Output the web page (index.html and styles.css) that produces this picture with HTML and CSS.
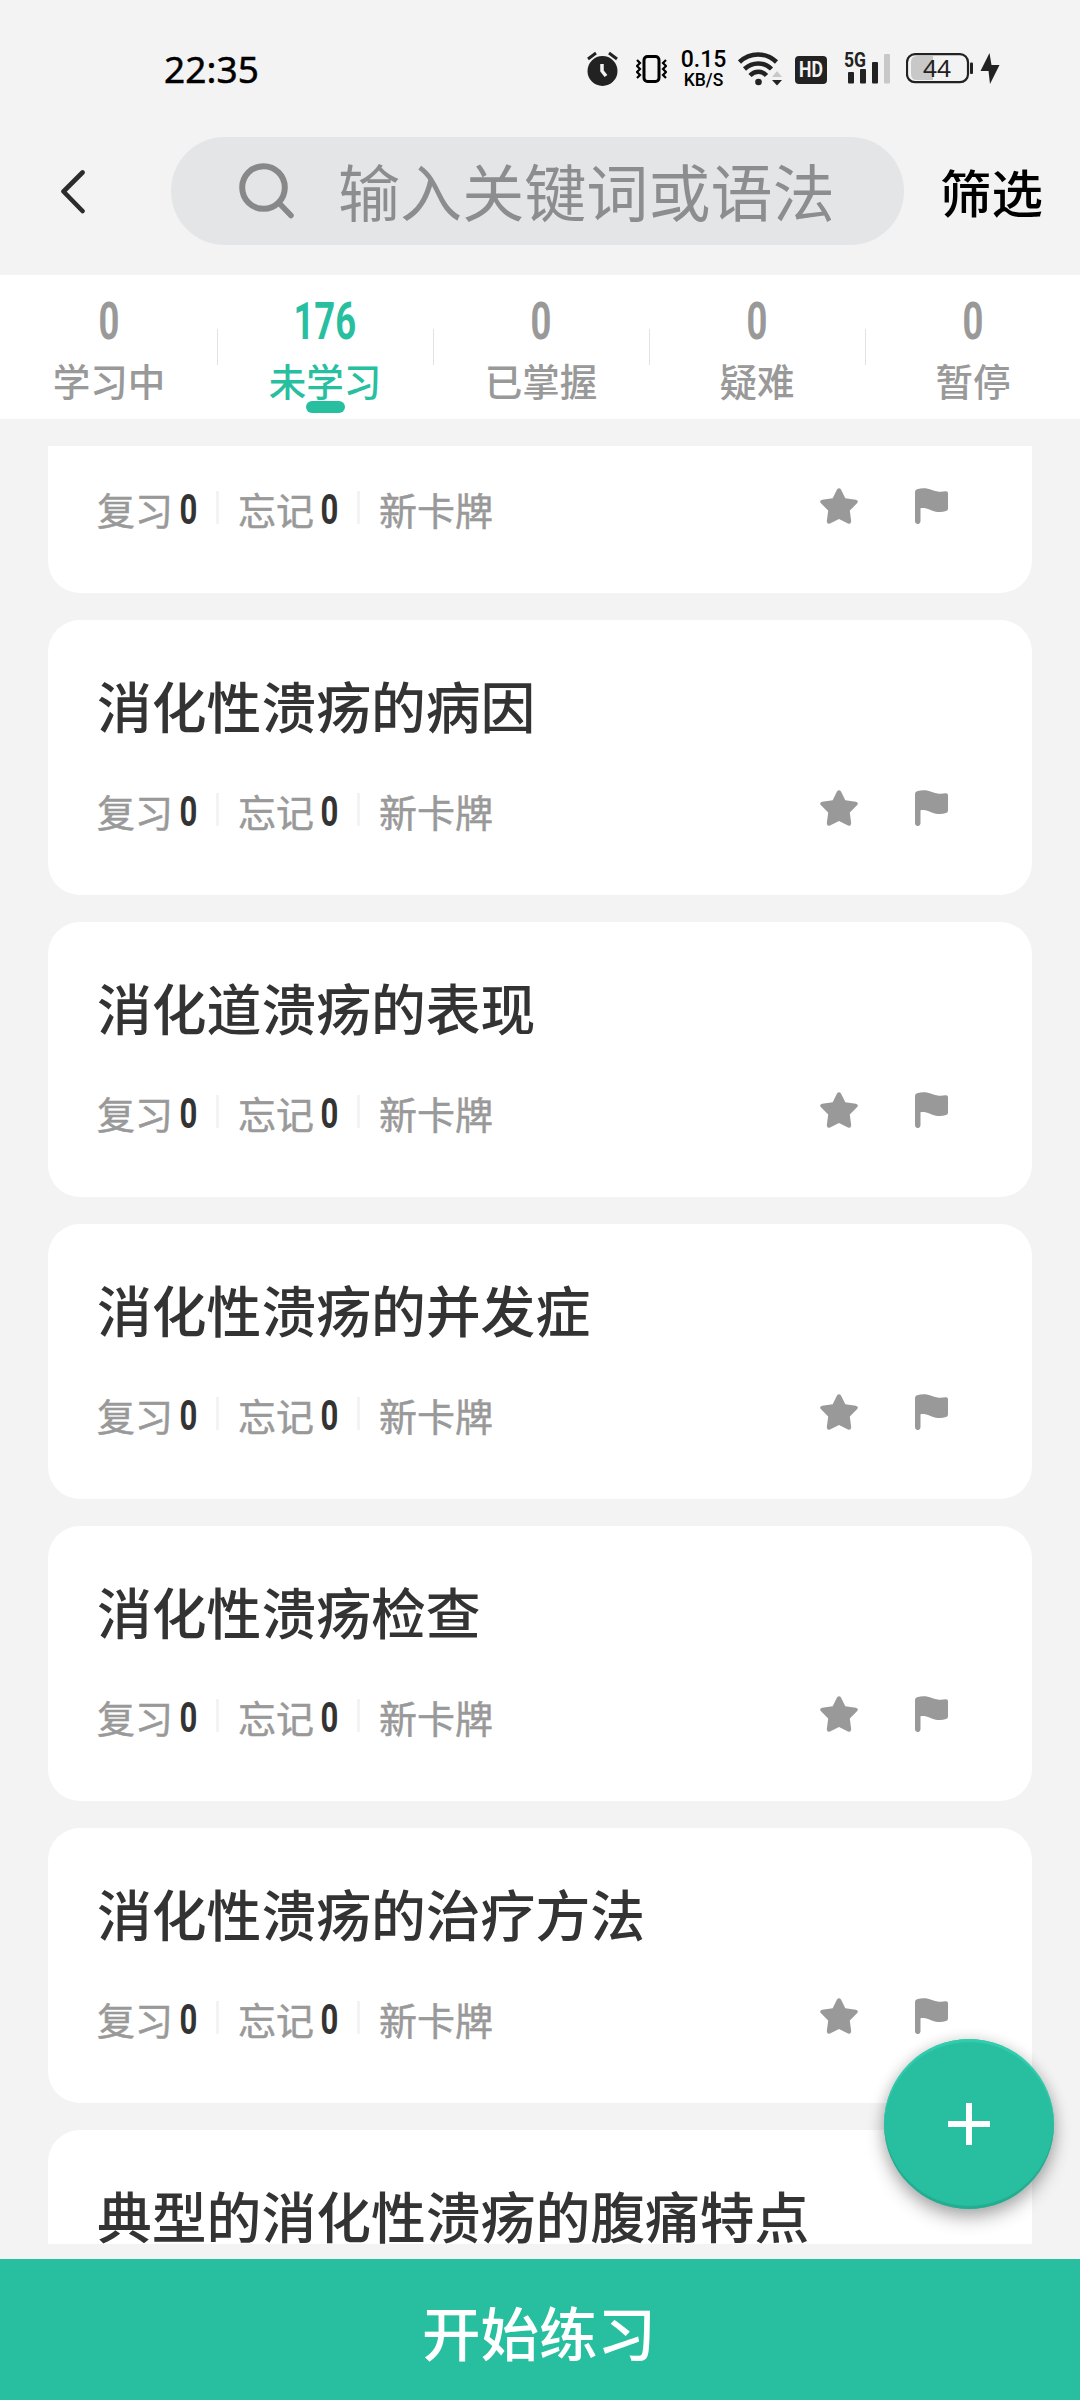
FILE: index.html
```html
<!DOCTYPE html>
<html lang="zh-CN">
<head>
    <meta charset="UTF-8">
    <meta name="viewport" content="width=device-width, initial-scale=1.0">
    <title>卡牌列表</title>
    <link rel="stylesheet" href="styles.css">
</head>
<body>
    <!-- shared icons -->
    <svg class="symbols">
        <symbol id="star" viewBox="0 0 38 36">
            <path d="M17 1.6Q19 -1 21 1.6L25.3 10.3L35.8 11.7Q39 12.8 37.2 15L29.8 22.6L31.2 33.2Q31 36.6 28 35.6L19 31L10 35.6Q7 36.6 6.8 33.2L8.2 22.6L0.8 15Q-1 12.8 2.2 11.7L12.7 10.3Z"/>
        </symbol>
        <symbol id="flag" viewBox="0 0 33 36">
            <path d="M0 4Q0 1.8 2 1.2C7 -0.4 12 -0.2 17 1.9C21.5 3.8 26 4 30.5 3.3Q33 3 33 5.3V20.5Q33 22.5 31 23.1C26 24.6 20 24.2 15 21.7C11.5 20.2 8.500 19.700 5.500 20.200V33.300A2.750 2.750 0 0 1 0 33.300Z"/>
        </symbol>
    </svg>

    <div class="status-bar">
        <div class="time">22:35</div>
        <div class="status-icons">
            <svg class="alarm" width="31" height="36" viewBox="0 0 31 36">
                <circle cx="15.500" cy="20" r="15" fill="#222"/>
                <path d="M1 8L9 2M30 8L22 2" stroke="#222" stroke-width="3" fill="none"/>
                <path d="M15 13V20L19 25" stroke="#f3f3f3" stroke-width="3.500" fill="none"/>
            </svg>
            <svg class="vibrate" width="31" height="36" viewBox="0 0 31 36" fill="none" stroke="#000">
                <rect x="8" y="5.500" width="15" height="25" rx="3.500" stroke-width="3"/>
                <path d="M1 9L4 12L1 15L4 18L1 21L4 24L1 27M30 9L27 12L30 15L27 18L30 21L27 24L30 27" stroke-width="2.200"/>
            </svg>
            <div class="speed"><span>0.15</span><small>KB/S</small></div>
            <svg class="wifi" width="45" height="36" viewBox="0 0 45 36">
                <g fill="none" stroke="#222" stroke-width="4.500">
                    <path d="M1.500 11C12 1 28 1 38.500 11"/>
                    <path d="M6.500 18C14.500 10.500 26 10.500 33.500 18"/>
                    <path d="M12 24.500C17 19.500 24 19.500 28.500 24.500"/>
                </g>
                <circle cx="20.500" cy="31" r="3.300" fill="#222"/>
                <path d="M34 26L39 20L44 26Z" fill="#c8c8c8"/>
                <path d="M34 29L39 34.500L44 29Z" fill="#222"/>
            </svg>
            <div class="hd"><span>HD</span></div>
            <svg class="signal" width="46" height="36" viewBox="0 0 46 36" fill="#222">
                <text x="0" y="16" textLength="22" lengthAdjust="spacingAndGlyphs">5G</text>
                <rect x="4" y="21" width="6" height="11.500" rx="1"/>
                <rect x="16" y="18" width="6" height="14.500" rx="1"/>
                <rect x="28" y="11" width="6" height="21.500" rx="1"/>
                <rect x="40" y="3" width="6" height="29.500" rx="1" fill="#c8c8c8"/>
            </svg>
            <svg class="battery" width="67" height="36" viewBox="0 0 67 36">
                <path d="M11 5H27V29H11Q5 29 5 23V11Q5 5 11 5Z" fill="#c8c8c8"/>
                <rect x="1" y="3.200" width="61" height="28" rx="8" fill="none" stroke="#222" stroke-width="2.200"/>
                <rect x="64" y="11.500" width="3" height="11.500" rx="1" fill="#222"/>
                <text x="17" y="26" textLength="28" lengthAdjust="spacingAndGlyphs">44</text>
            </svg>
            <svg class="bolt" width="20" height="36" viewBox="0 0 20 36">
                <path d="M9.500 2L0.500 20H8.500L10 33L19.500 14H11.500Z" fill="#222"/>
            </svg>
        </div>
    </div>

    <div class="search-bar">
        <svg class="back" width="26" height="44" viewBox="0 0 26 44">
            <path d="M22.500 2.500L3.500 21.500L22.500 41" fill="none" stroke="#2c2c2c" stroke-width="4.600" stroke-linecap="round" stroke-linejoin="round"/>
        </svg>
        <div class="search-box">
            <svg width="56" height="56" viewBox="0 0 56 56" fill="none" stroke="#888">
                <circle cx="24.500" cy="24.500" r="21.300" stroke-width="6"/>
                <path d="M40 40L52 52.500" stroke-width="5.500" stroke-linecap="round"/>
            </svg>
            <span>输入关键词或语法</span>
        </div>
        <div class="filter">筛选</div>
    </div>

    <div class="tabs">
        <div class="tab"><b>0</b><span>学习中</span></div>
        <div class="tab active"><b>176</b><span>未学习</span></div>
        <div class="tab"><b>0</b><span>已掌握</span></div>
        <div class="tab"><b>0</b><span>疑难</span></div>
        <div class="tab"><b>0</b><span>暂停</span></div>
    </div>

    <div class="card-list">
        <div class="card first">
            <div class="card-info">
                <span>复习</span><b>0</b><i></i><span>忘记</span><b>0</b><i></i><span>新卡牌</span>
                <svg class="star"><use href="#star"/></svg><svg class="flag"><use href="#flag"/></svg>
            </div>
        </div>
        <div class="card">
            <h3>消化性溃疡的病因</h3>
            <div class="card-info">
                <span>复习</span><b>0</b><i></i><span>忘记</span><b>0</b><i></i><span>新卡牌</span>
                <svg class="star"><use href="#star"/></svg><svg class="flag"><use href="#flag"/></svg>
            </div>
        </div>
        <div class="card">
            <h3>消化道溃疡的表现</h3>
            <div class="card-info">
                <span>复习</span><b>0</b><i></i><span>忘记</span><b>0</b><i></i><span>新卡牌</span>
                <svg class="star"><use href="#star"/></svg><svg class="flag"><use href="#flag"/></svg>
            </div>
        </div>
        <div class="card">
            <h3>消化性溃疡的并发症</h3>
            <div class="card-info">
                <span>复习</span><b>0</b><i></i><span>忘记</span><b>0</b><i></i><span>新卡牌</span>
                <svg class="star"><use href="#star"/></svg><svg class="flag"><use href="#flag"/></svg>
            </div>
        </div>
        <div class="card">
            <h3>消化性溃疡检查</h3>
            <div class="card-info">
                <span>复习</span><b>0</b><i></i><span>忘记</span><b>0</b><i></i><span>新卡牌</span>
                <svg class="star"><use href="#star"/></svg><svg class="flag"><use href="#flag"/></svg>
            </div>
        </div>
        <div class="card">
            <h3>消化性溃疡的治疗方法</h3>
            <div class="card-info">
                <span>复习</span><b>0</b><i></i><span>忘记</span><b>0</b><i></i><span>新卡牌</span>
                <svg class="star"><use href="#star"/></svg><svg class="flag"><use href="#flag"/></svg>
            </div>
        </div>
        <div class="card">
            <h3>典型的消化性溃疡的腹痛特点</h3>
        </div>
    </div>

    <div class="start-button">开始练习</div>

    <div class="add-button">
        <svg width="42" height="42" viewBox="0 0 42 42">
            <path d="M21 0V42M0 21H42" stroke="#fff" stroke-width="6"/>
        </svg>
    </div>
</body>
</html>
```
FILE: styles.css
```css
* {
    box-sizing: border-box;
}
body {
    font-family: "Noto Sans CJK SC", sans-serif;
    margin: 0;
    width: 1080px;
    height: 2400px;
    display: flex;
    flex-direction: column;
    background-color: #f3f3f3;
    position: relative;
    overflow: hidden;
}
svg {
    display: block;
    flex-shrink: 0;
}
.symbols {
    position: absolute;
    width: 0;
    height: 0;
}

/* status bar */
.status-bar {
    height: 137px;
    flex-shrink: 0;
    padding: 51px 80px 0 164px;
    display: flex;
    justify-content: space-between;
    align-items: flex-start;
}
.time {
    font: 400 37px/36px "Noto Sans", sans-serif;
    -webkit-text-stroke: 0.5px #000;
    letter-spacing: 0.1px;
    color: #000;
}
.status-icons {
    display: flex;
    height: 36px;
}
.vibrate {
    margin-left: 18px;
}
.speed {
    width: 43px;
    margin-left: 15px;
    display: flex;
    flex-direction: column;
    align-items: center;
    font-family: "Roboto", sans-serif;
    font-weight: 500;
    color: #000;
    white-space: nowrap;
}
.speed span {
    font-size: 23px;
    line-height: 18px;
}
.speed small {
    font-size: 17.500px;
    line-height: 22px;
}
.wifi {
    margin-left: 13px;
}
.hd {
    width: 32px;
    height: 28px;
    margin: 5px 0 0 12px;
    border-radius: 4px;
    background-color: #222;
    color: #f3f3f3;
    font: bold 22px/28px "Roboto", sans-serif;
    display: flex;
    justify-content: center;
}
.hd span {
    transform: scaleX(0.8);
}
.signal {
    margin-left: 17px;
    font: bold 20px "Roboto", sans-serif;
}
.battery {
    margin-left: 16px;
    font: 24px "Noto Sans", sans-serif;
    fill: #222;
}
.bolt {
    margin-left: 7px;
}

/* search */
.search-bar {
    height: 138px;
    flex-shrink: 0;
    display: flex;
    align-items: flex-start;
}
.back {
    margin: 33px 0 0 60px;
}
.search-box {
    width: 733px;
    height: 108px;
    margin-left: 85px;
    padding-left: 68px;
    border-radius: 54px;
    background-color: #e4e5e7;
    display: flex;
    align-items: center;
}
.search-box span {
    margin-left: 43px;
    font-size: 62.100px;
    line-height: 106px;
    color: #8c8d8f;
    white-space: nowrap;
    margin-top: -2px;
}
.filter {
    margin-left: 36px;
    font-size: 51.500px;
    line-height: 107px;
    font-weight: 500;
    color: #000;
}

/* tabs */
.tabs {
    height: 144px;
    flex-shrink: 0;
    display: flex;
    background-color: #fff;
}
.tab {
    flex: 1;
    position: relative;
    padding-left: 2px;
    display: flex;
    flex-direction: column;
    align-items: center;
    color: #999;
}
.tab b {
    margin-top: 21px;
    font: bold 52px/52px "Roboto", sans-serif;
    transform: scaleX(0.7);
}
.tab span {
    margin-top: 4px;
    font-size: 37.500px;
    line-height: 56px;
    font-weight: 500;
}
.tab + .tab::before {
    content: "";
    position: absolute;
    left: 1px;
    top: 54px;
    width: 1px;
    height: 36px;
    background-color: #e2e2e2;
}
.tab.active {
    color: #28bfa0;
}
.tab.active::after {
    content: "";
    position: absolute;
    left: 90px;
    top: 126px;
    width: 39px;
    height: 12px;
    border-radius: 6px;
    background-color: #28bfa0;
}

/* cards */
.card-list {
    height: 1798px;
    flex-shrink: 0;
    margin: 27px 48px 0;
    overflow: hidden;
}
.card {
    height: 275px;
    margin-bottom: 27px;
    padding: 43px 84px 0 49px;
    border-radius: 32px;
    background-color: #fff;
}
.card.first {
    height: 147px;
    padding-top: 32px;
    border-radius: 0 0 32px 32px;
}
.card h3 {
    margin: 0;
    font-size: 54.800px;
    line-height: 82px;
    font-weight: 500;
    color: #333;
    white-space: nowrap;
}
.card-info {
    display: flex;
    align-items: center;
    height: 56px;
    margin-top: 35px;
}
.first .card-info {
    margin-top: 0;
}
.card-info span {
    margin-top: 6px;
    font-size: 38px;
    line-height: 56px;
    color: #999;
    -webkit-text-stroke: 0.5px #999;
}
.card-info b {
    width: 31px;
    margin-top: 8px;
    font: bold 42px/50px "Roboto", sans-serif;
    text-align: center;
    color: #333;
    transform: scaleX(0.74);
}
.card-info i {
    width: 3px;
    height: 33px;
    margin: 2px 19px 0 12px;
    background-color: #f3f3f3;
}
.card-info .star {
    width: 38px;
    height: 36px;
    margin-left: auto;
    fill: #999;
}
.card-info .flag {
    width: 33px;
    height: 36px;
    margin-left: 57px;
    fill: #999;
}

.start-button {
    height: 141px;
    margin-top: 15px;
    padding-right: 2px;
    flex-shrink: 0;
    background-color: #28bfa0;
    color: #fff;
    font-size: 58.500px;
    line-height: 143px;
    font-weight: 500;
    text-align: center;
}
.add-button {
    position: absolute;
    left: 884px;
    top: 2039px;
    width: 170px;
    height: 170px;
    border-radius: 50%;
    background-color: #28bfa0;
    box-shadow: 0 9px 18px rgba(0,0,0,0.3), 0 0 14px rgba(0,0,0,0.12), inset 0 3px 1px #30cdae, inset 0 -3px 1px #24ac90;
    display: flex;
    justify-content: center;
    align-items: center;
}
```
